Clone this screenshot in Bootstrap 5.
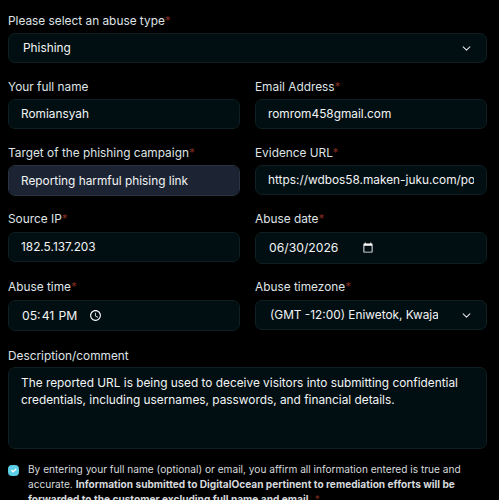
<!DOCTYPE html>
<html lang="en"><head><meta charset="utf-8">
<title>Abuse report</title>
<link href="https://cdn.jsdelivr.net/npm/bootstrap@5.3.0/dist/css/bootstrap.min.css" rel="stylesheet">
<style>
html,body{height:500px;overflow:hidden}
body{background:#000;color:#e3e6e8;font-family:Inter,"Liberation Sans",sans-serif;font-size:11.85px;color-scheme:dark}
.abuse-form{padding:13px 12px 0 8px}
.abuse-form .row{--bs-gutter-x:15px;--bs-gutter-y:0;align-items:flex-start}
.fld-label{display:block;font-size:11.85px;line-height:16px;margin:0 0 4px;color:#dfe3e6}
.req{color:#7c2a1e}
.abuse-form .form-control,.abuse-form .form-select{background-color:#020f12;border:1px solid #0e2024;border-radius:7px;color:#f2f4f5;font-size:11.85px;line-height:16px;padding:6px 12px;height:30px;box-shadow:none;min-height:0}
.abuse-form .form-select{padding-left:14px;padding-right:48px;background-position:right 15px center;background-size:9px 9px;background-image:url("data:image/svg+xml,%3csvg xmlns='http://www.w3.org/2000/svg' viewBox='0 0 16 16'%3e%3cpath fill='none' stroke='%23e3e6e8' stroke-linecap='round' stroke-linejoin='round' stroke-width='1.8' d='m2 5 6 6 6-6'/%3e%3c/svg%3e")}
.abuse-form .is-filled{background-color:#1c2433;border-color:#2a3342;height:31px}
.abuse-form .dt-field{height:32px;padding:6px 13px;font-size:12.2px}
.abuse-form .dt-time{height:31px}
.dt-field::-webkit-datetime-edit{flex:0 0 auto;padding:0}
.dt-field::-webkit-date-and-time-value{text-align:left;min-width:0}
.dt-field::-webkit-calendar-picker-indicator{margin-left:2px;margin-right:auto}
input[type=date].dt-field::-webkit-calendar-picker-indicator{margin-left:-4px}
.abuse-form textarea.form-control{height:82px;padding:7px 12px;line-height:17px;resize:none}
.fld-row{margin-bottom:16px}
.abuse-form .fld-row.gap-less{margin-bottom:15px}
.abuse-form .fld-row.gap-more{margin-bottom:17px}
.lbl-wide{margin-bottom:5px}
.lbl-tight{margin-bottom:3px}
.consent{display:flex;gap:9px;margin-top:13px;font-size:10.15px;line-height:15px;color:#d5d9dc}
.consent .form-check-input{flex:none;width:11px;height:11px;margin-top:3px;background-color:#5ccfe6;border-color:#5ccfe6;border-radius:3.5px;--bs-form-check-bg-image:url("data:image/svg+xml,%3csvg xmlns='http://www.w3.org/2000/svg' viewBox='0 0 20 20'%3e%3cpath fill='none' stroke='%23123' stroke-linecap='round' stroke-linejoin='round' stroke-width='2.5' d='m6 10 3 3 6-6'/%3e%3c/svg%3e")}
</style></head>
<body>
<form class="abuse-form">
  <div class="fld-row">
    <label class="fld-label" for="t">Please select an abuse type<span class="req">*</span></label>
    <select id="t" class="form-select"><option>Phishing</option></select>
  </div>
  <div class="row fld-row">
    <div class="col-6"><label class="fld-label" for="n">Your full name</label><input id="n" class="form-control" value="Romiansyah"></div>
    <div class="col-6"><label class="fld-label" for="e">Email Address<span class="req">*</span></label><input id="e" class="form-control" value="romrom458gmail.com"></div>
  </div>
  <div class="row fld-row gap-less">
    <div class="col-6"><label class="fld-label" for="c">Target of the phishing campaign<span class="req">*</span></label><input id="c" class="form-control is-filled" value="Reporting harmful phising link"></div>
    <div class="col-6"><label class="fld-label" for="u">Evidence URL<span class="req">*</span></label><input id="u" class="form-control" value="https://wdbos58.maken-juku.com/pos/index.html"></div>
  </div>
  <div class="row fld-row gap-less">
    <div class="col-6"><label class="fld-label lbl-wide" for="i">Source IP<span class="req">*</span></label><input id="i" class="form-control" value="182.5.137.203"></div>
    <div class="col-6"><label class="fld-label lbl-wide" for="d">Abuse date<span class="req">*</span></label><input id="d" type="date" class="form-control dt-field" value="2026-06-30"></div>
  </div>
  <div class="row fld-row gap-more">
    <div class="col-6"><label class="fld-label lbl-wide" for="a">Abuse time<span class="req">*</span></label><input id="a" type="time" class="form-control dt-field dt-time" value="17:41"></div>
    <div class="col-6"><label class="fld-label lbl-wide" for="z">Abuse timezone<span class="req">*</span></label><select id="z" class="form-select"><option>(GMT -12:00) Eniwetok, Kwajalein</option></select></div>
  </div>
  <div>
    <label class="fld-label lbl-tight" for="m">Description/comment</label>
    <textarea id="m" class="form-control">The reported URL is being used to deceive visitors into submitting confidential credentials, including usernames, passwords, and financial details.</textarea>
  </div>
  <div class="consent">
    <input class="form-check-input" type="checkbox" checked id="k">
    <label for="k">By entering your full name (optional) or email, you affirm all information entered is true and accurate. <b>Information submitted to DigitalOcean pertinent to remediation efforts will be forwarded to the customer excluding full name and email.</b> <span class="req">*</span></label>
  </div>
</form>
<script src="https://cdn.jsdelivr.net/npm/bootstrap@5.3.0/dist/js/bootstrap.bundle.min.js"></script>
</body></html>
